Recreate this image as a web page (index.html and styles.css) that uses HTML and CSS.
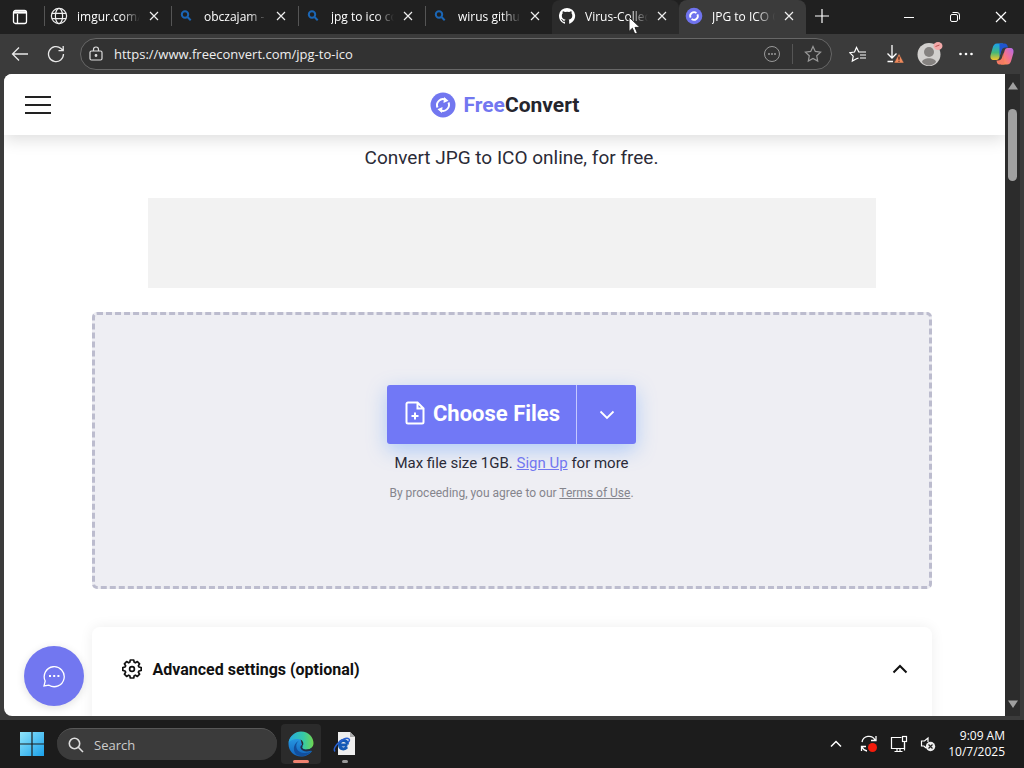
FILE: index.html
```html
<!DOCTYPE html>
<html lang="en">
<head>
<meta charset="UTF-8">
<meta name="viewport" content="width=device-width, initial-scale=1.0">
<title>JPG to ICO Converter - FreeConvert</title>
<link rel="stylesheet" href="styles.css">
</head>
<body>

<div class="browser">
    <div class="tab-strip">
        <button class="tab-menu" aria-label="Tab actions">
            <svg width="16" height="16" viewBox="0 0 16 16" fill="none" stroke="#fff" stroke-width="1.3"><rect x="1.5" y="1.5" width="13" height="13" rx="2"/><path d="M2 3.4h12" stroke-width="2.4"/><path d="M5.5 5v9"/></svg>
        </button>
        <div class="tab">
            <svg width="18" height="18" viewBox="0 0 18 18" fill="none" stroke="#eee" stroke-width="1.2"><circle cx="9" cy="9" r="7.6"/><ellipse cx="9" cy="9" rx="3.6" ry="7.6"/><path d="M2 6.3h14M2 11.7h14"/></svg>
            <span class="tab-title">imgur.com/</span>
            <button class="tab-close" aria-label="Close tab"><svg width="10" height="10" viewBox="0 0 10 10" stroke="#eee" stroke-width="1.2"><path d="M1 1l8 8M9 1l-8 8"/></svg></button>
        </div>
        <div class="tab">
            <svg width="18" height="18" viewBox="0 0 18 18" fill="none" stroke="#1b66b5" stroke-width="2"><circle cx="8" cy="7.5" r="3.2"/><path d="M10.5 10l3.2 3.2"/></svg>
            <span class="tab-title">obczajam - S</span>
            <button class="tab-close" aria-label="Close tab"><svg width="10" height="10" viewBox="0 0 10 10" stroke="#eee" stroke-width="1.2"><path d="M1 1l8 8M9 1l-8 8"/></svg></button>
        </div>
        <div class="tab">
            <svg width="18" height="18" viewBox="0 0 18 18" fill="none" stroke="#1b66b5" stroke-width="2"><circle cx="8" cy="7.5" r="3.2"/><path d="M10.5 10l3.2 3.2"/></svg>
            <span class="tab-title">jpg to ico co</span>
            <button class="tab-close" aria-label="Close tab"><svg width="10" height="10" viewBox="0 0 10 10" stroke="#eee" stroke-width="1.2"><path d="M1 1l8 8M9 1l-8 8"/></svg></button>
        </div>
        <div class="tab">
            <svg width="18" height="18" viewBox="0 0 18 18" fill="none" stroke="#1b66b5" stroke-width="2"><circle cx="8" cy="7.5" r="3.2"/><path d="M10.5 10l3.2 3.2"/></svg>
            <span class="tab-title">wirus github</span>
            <button class="tab-close" aria-label="Close tab"><svg width="10" height="10" viewBox="0 0 10 10" stroke="#eee" stroke-width="1.2"><path d="M1 1l8 8M9 1l-8 8"/></svg></button>
        </div>
        <div class="tab tab-hover">
            <svg width="18" height="18" viewBox="0 0 16 16" fill="#fff"><path d="M8 .8a7.2 7.2 0 0 0-2.3 14c.4.1.5-.2.5-.4v-1.3c-2 .4-2.5-.9-2.5-.9-.3-.8-.8-1-.8-1-.7-.5 0-.5 0-.5.8.1 1.2.8 1.2.8.7 1.1 1.7.8 2.1.6.1-.5.3-.8.5-1-1.6-.2-3.3-.8-3.3-3.6 0-.8.3-1.4.8-1.9-.1-.2-.4-1 .1-1.9 0 0 .6-.2 2 .7a7 7 0 0 1 3.6 0c1.4-.9 2-.7 2-.7.4.9.1 1.7.1 1.9.5.5.7 1.1.7 1.9 0 2.8-1.7 3.4-3.3 3.6.3.2.5.7.5 1.3v2c0 .2.1.5.5.4A7.2 7.2 0 0 0 8 .8z"/></svg>
            <span class="tab-title">Virus-Collec</span>
            <button class="tab-close" aria-label="Close tab"><svg width="10" height="10" viewBox="0 0 10 10" stroke="#eee" stroke-width="1.2"><path d="M1 1l8 8M9 1l-8 8"/></svg></button>
            <svg class="cursor" width="14" height="20" viewBox="0 0 14 20"><path d="M1 1v14.5l3.4-3.2 2.4 5.7 2.6-1.1L7 11.4h5z" fill="#fff" stroke="#222"/></svg>
        </div>
        <div class="tab tab-active">
            <svg width="18" height="18" viewBox="0 0 26 26"><circle cx="13" cy="13" r="12" fill="#6f73ee"/><g fill="none" stroke="#fff" stroke-width="2.6"><path d="M8 15.5a5.6 5.6 0 0 1 8.5-6.8M18 10.5a5.6 5.6 0 0 1-8.5 6.8"/></g></svg>
            <span class="tab-title">JPG to ICO C</span>
            <button class="tab-close" aria-label="Close tab"><svg width="10" height="10" viewBox="0 0 10 10" stroke="#eee" stroke-width="1.2"><path d="M1 1l8 8M9 1l-8 8"/></svg></button>
        </div>
        <button class="new-tab" aria-label="New tab"><svg width="16" height="16" viewBox="0 0 16 16" stroke="#fff" stroke-width="1.2"><path d="M8 1v14M1 8h14"/></svg></button>
        <div class="window-buttons">
            <button aria-label="Minimize"><svg width="12" height="12" viewBox="0 0 12 12" stroke="#fff"><path d="M1 6.5h10"/></svg></button>
            <button aria-label="Restore"><svg width="12" height="12" viewBox="0 0 12 12" fill="none" stroke="#fff"><rect x="1.5" y="3.5" width="7" height="7" rx="1.5"/><path d="M3.5 1.5H8A2.5 2.5 0 0 1 10.5 4v4.5"/></svg></button>
            <button aria-label="Close"><svg width="12" height="12" viewBox="0 0 12 12" stroke="#fff" stroke-width="1.2"><path d="M1 1l10 10M11 1L1 11"/></svg></button>
        </div>
    </div>

    <div class="toolbar">
        <button aria-label="Back"><svg width="18" height="16" viewBox="0 0 18 16" fill="none" stroke="#e8e8e8" stroke-width="1.3"><path d="M17 8H1.5M8 1.5L1.5 8 8 14.5"/></svg></button>
        <button aria-label="Refresh"><svg width="18" height="18" viewBox="0 0 18 18" fill="none" stroke="#e8e8e8" stroke-width="1.3"><path d="M16.5 9A7.5 7.5 0 1 1 14 3.5l2 2M16.2 1v4.700h-4.700"/></svg></button>
        <div class="address">
            <svg width="14" height="16" viewBox="0 0 14 16" fill="none" stroke="#ddd" stroke-width="1.2"><rect x="1" y="5" width="12" height="9" rx="1.5"/><path d="M4.5 5V3.5a2.5 2.5 0 0 1 5 0V5"/><circle cx="7" cy="9.5" r=".8" fill="#ddd"/></svg>
            <input type="text" aria-label="Address" value="https://www.freeconvert.com/jpg-to-ico">
            <button aria-label="Site options"><svg width="18" height="18" viewBox="0 0 18 18" fill="none" stroke="#999"><circle cx="9" cy="9" r="7.5"/><path d="M5 9h2M8 9h2M11 9h2" stroke-width="1.7"/></svg></button>
            <span class="address-line"></span>
            <button aria-label="Add to favorites"><svg width="18" height="18" viewBox="0 0 18 18" fill="none" stroke="#999" stroke-width="1.2"><path d="M9 1.5l2.3 4.9 5.3.7-3.9 3.7 1 5.3L9 13.5l-4.7 2.6 1-5.3L1.4 7.1l5.3-.7z"/></svg></button>
        </div>
        <div class="toolbar-icons">
            <button aria-label="Favorites"><svg width="18" height="18" viewBox="0 0 18 18" fill="none" stroke="#fff" stroke-width="1.2"><path d="M9.5 13l-2 .8-4.200 2.300.9-5L.7 7.700l4.800-.7 2-4.500L9.800 7H17M11 10h6M11 13h6"/></svg></button>
            <button aria-label="Downloads"><svg width="22" height="22" viewBox="0 0 22 22" fill="none" stroke="#fff" stroke-width="1.3"><path d="M9 2v13M4.5 10.5L9 15l4.500-4.500M4.500 18.500H10"/><path d="M16 10.500l5 9.500H11z" fill="#f08a5c" stroke="#3b3b3b" stroke-width=".5"/><path d="M16 13.500v3.300M16 17.800v1" stroke="#4b241a"/></svg></button>
            <button aria-label="Profile"><svg width="26" height="26" viewBox="0 0 26 26"><circle cx="12" cy="13.5" r="11.5" fill="#d2d0ce"/><circle cx="12" cy="11" r="5" fill="#858280"/><path d="M5 21c1-5 13-5 14 0-3.500 4.500-10.500 4.500-14 0z" fill="#858280"/><ellipse cx="21" cy="5" rx="4.5" ry="4" fill="#f3a9a9"/><path d="M18.5 5.5l4-1.500" stroke="#b55"/></svg></button>
            <button aria-label="Settings and more"><svg width="16" height="4" viewBox="0 0 16 4" fill="#fff"><circle cx="2.5" cy="2" r="1.3"/><circle cx="8" cy="2" r="1.3"/><circle cx="13.5" cy="2" r="1.3"/></svg></button>
            <button aria-label="Copilot"><svg width="24" height="22" viewBox="0 0 24 22">
                <defs>
                    <linearGradient id="cpA" x1="0" y1="0" x2="0" y2="1"><stop offset="0" stop-color="#18a0f0"/><stop offset=".55" stop-color="#45b878"/><stop offset="1" stop-color="#f7c52a"/></linearGradient>
                    <linearGradient id="cpB" x1="1" y1="0" x2="0" y2="1"><stop offset="0" stop-color="#b06af0"/><stop offset=".5" stop-color="#f3708f"/><stop offset="1" stop-color="#fb9a3c"/></linearGradient>
                </defs>
                <path d="M7 .5h6L9.5 14c-.5 2-1.400 3-3 3H4c-3 0-4-2-3.400-5l2-7c.8-3 2-4.500 4.400-4.500z" fill="url(#cpA)"/>
                <path d="M9.5 .5h5c2 0 3 1.500 3.500 4h-2.500c-2 0-3.500 1-4 3l-2 6.500z" fill="#1f55cf"/>
                <path d="M17 21.500h-6L14.500 8c.5-2 1.400-3 3-3H20c3 0 4 2 3.400 5l-2 7c-.8 3-2 4.500-4.400 4.500z" fill="url(#cpB)"/>
                <path d="M14.500 21.500h-5c-2 0-2.500-1.500-3-4H8c2 0 3.500-1 4-3l1.500-5z" fill="#f47a62"/></svg></button>
        </div>
    </div>

    <div class="viewport">
        <div class="page">
            <header class="header">
                <button class="hamburger" aria-label="Menu"><span></span><span></span><span></span></button>
                <a class="logo" href="#">
                    <svg width="26" height="26" viewBox="0 0 26 26"><circle cx="13" cy="13" r="12.5" fill="#7277f0"/><g fill="none" stroke="#fff" stroke-width="2"><path d="M7.500 15.500A6 6 0 0 1 15.500 7.700M18.500 10.500a6 6 0 0 1-8 7.800"/></g><path d="M14 5l4.500 3.700-5 2.300zM12 21l-4.500-3.700 5-2.300z" fill="#fff"/></svg>
                    <span><span class="logo-free">Free</span>Convert</span>
                </a>
            </header>
            <main class="content">
                <p class="subtitle">Convert JPG to ICO online, for free.</p>
                <div class="banner"></div>
                <section class="dropzone">
                    <div class="choose">
                        <button class="choose-files">
                            <svg width="20" height="24" viewBox="0 0 20 24" fill="none" stroke="#fff" stroke-width="2"><path d="M12.5 1.5H3A1.5 1.5 0 0 0 1.5 3v18A1.5 1.5 0 0 0 3 22.500h14a1.500 1.500 0 0 0 1.500-1.500V7.500zM12.500 1.500v6h6M10 11.500v7M6.500 15h7"/></svg>
                            Choose Files
                        </button>
                        <button class="choose-more" aria-label="More sources"><svg width="16" height="10" viewBox="0 0 16 10" fill="none" stroke="#fff" stroke-width="1.8"><path d="M1.5 1.5L8 8l6.500-6.500"/></svg></button>
                    </div>
                    <p class="limit">Max file size 1GB. <a href="#">Sign Up</a> for more</p>
                    <p class="terms">By proceeding, you agree to our <a href="#">Terms of Use</a>.</p>
                </section>
                <section class="settings">
                    <button class="settings-head">
                        <svg width="20" height="20" viewBox="0 0 20 20" fill="none" stroke="#111" stroke-width="1.7" stroke-linejoin="round"><path d="M8.300 1h3.400l.5 2.300 1.200.5 2-1.200 2.200 2.200-1.200 2 .5 1.200 2.300.5v3l-2.300.5-.5 1.200 1.200 2-2.200 2.200-2-1.200-1.200.5-.5 2.300H8.300l-.5-2.300-1.200-.5-2 1.200-2.200-2.200 1.200-2-.5-1.200L.8 11.500v-3L3.100 8l.5-1.200-1.200-2 2.200-2.200 2 1.200 1.200-.5z"/><circle cx="10" cy="10" r="2.4"/></svg>
                        <span>Advanced settings (optional)</span>
                        <svg width="16" height="10" viewBox="0 0 16 10" fill="none" stroke="#111" stroke-width="2"><path d="M1.5 8.5L8 2l6.500 6.500"/></svg>
                    </button>
                </section>
            </main>
            <button class="chat" aria-label="Chat">
                <svg width="24" height="24" viewBox="0 0 24 24" fill="none" stroke="#fff" stroke-width="1.3"><path d="M2 22l1.200-5A10 10 0 1 1 7 21.200z"/><path d="M7 12h2M11.200 12h2M15.400 12h2" stroke-width="2"/></svg>
            </button>
        </div>
        <div class="scrollbar">
            <svg width="10" height="8" viewBox="0 0 10 8" fill="#a0a0a0"><path d="M5 0l5 7.500H0z"/></svg>
            <div class="scroll-thumb"></div>
            <svg width="10" height="8" viewBox="0 0 10 8" fill="#a0a0a0"><path d="M5 8L0 .5h10z"/></svg>
        </div>
    </div>
</div>

<div class="taskbar">
    <button class="start" aria-label="Start"><svg width="24" height="24" viewBox="0 0 24 24">
        <defs><linearGradient id="win" x1="0" y1="0" x2="1" y2="1"><stop offset="0" stop-color="#8fe5fb"/><stop offset="1" stop-color="#1aa0ea"/></linearGradient></defs>
        <path d="M0 0h11.400v11.400H0zM12.600 0H24v11.400H12.600zM0 12.600h11.400V24H0zM12.600 12.600H24V24H12.600z" fill="url(#win)"/></svg></button>
    <label class="search">
        <svg width="16" height="16" viewBox="0 0 16 16" fill="none" stroke="#ddd" stroke-width="1.6"><circle cx="6.5" cy="6.5" r="5.2"/><path d="M10.3 10.3L15 15"/></svg>
        <input type="text" placeholder="Search" aria-label="Search">
    </label>
    <button class="app app-open" aria-label="Microsoft Edge"><svg width="26" height="26" viewBox="0 0 26 26">
        <defs>
            <linearGradient id="edA" x1="0" y1="0" x2="1" y2="0"><stop offset="0" stop-color="#25a9e4"/><stop offset=".6" stop-color="#36c9a6"/><stop offset="1" stop-color="#70d650"/></linearGradient>
            <linearGradient id="edB" x1="0" y1="0" x2="0" y2="1"><stop offset="0" stop-color="#2aa0e8"/><stop offset="1" stop-color="#1264bd"/></linearGradient>
        </defs>
        <path d="M.5 13C.5 5 7 2 12 6l2 8 5 5 5 1c-2 3.500-6.500 5.500-11 5.500C6 25.500.5 20 .5 13z" fill="url(#edB)"/>
        <path d="M11 9.500c-5 4-3 12 5 12.500 3 .2 6-.7 8-2.500-3 5-10 7-15 4.500-4.500-3-4.500-11 2-14.500z" fill="#124f9d"/>
        <path d="M.6 11.500C2 4.500 7 .5 13 .5c8 0 12.500 6 12.500 11.500 0 4-3 6.500-6.500 6.500-4 0-5.500-1.700-4.500-3 2-3 .5-7.500-5-7.500C5.500 8 2 9.500.6 11.500z" fill="url(#edA)"/>
        <path d="M14.500 15.500c-1 1.300.5 3 4.500 3 2 0 3.800-.8 5-2-.5 1.500-1 2.500-2 3.500-4 1.200-8.500.2-9.500-3-.3-1.200.3-2.300 1.200-3 .7.500 1 1 .8 1.500z" fill="#20304a"/></svg></button>
    <button class="app app-run" aria-label="Web document"><svg width="24" height="26" viewBox="0 0 24 26"><path d="M5 1h12l5 5v18H5z" fill="#eee"/><path d="M17 1v5h5z" fill="#aaa"/><path d="M14.500 14H6.500c.5 4.500 5 5 7.500 2M6.500 13.500c0-5.500 8-5.500 8 0" fill="none" stroke="#1459b5" stroke-width="3"/><path d="M2 20.500C-2 16 12 5 16 8c1 1 0 2.500-1 3.500" fill="none" stroke="#285fd0" stroke-width="1.5"/></svg></button>
    <div class="tray">
        <button aria-label="Show hidden icons"><svg width="12" height="8" viewBox="0 0 12 8" fill="none" stroke="#fff" stroke-width="1.5"><path d="M1 6.5l5-5 5 5"/></svg></button>
        <button aria-label="Windows Update"><svg width="18" height="18" viewBox="0 0 18 18" fill="none" stroke="#fff" stroke-width="1.3"><path d="M2 7a7 7 0 0 1 13-2M16 1v4.500h-5M1.500 16v-4.500H6M2 12a7 7 0 0 0 5 4"/><circle cx="12.5" cy="12.5" r="4.5" fill="#f41c0c" stroke="none"/></svg></button>
        <button aria-label="Network"><svg width="18" height="18" viewBox="0 0 18 18" fill="none" stroke="#fff" stroke-width="1.2"><path d="M11.500 2.500h-10v11h13V8M4.500 16.500h8M7 13.500v3M10 13.500v3"/><rect x="12.5" y="1.5" width="4" height="5"/><path d="M14.500 6.500v9"/></svg></button>
        <button aria-label="Volume"><svg width="16" height="16" viewBox="0 0 16 16" fill="none" stroke="#fff" stroke-width="1.2"><path d="M8 6V2L4.500 5H1.500v5H4l2 2"/><circle cx="10.5" cy="10.5" r="4.7" fill="#eee" stroke="none"/><path d="M8.500 8.500l4 4M12.500 8.500l-4 4" stroke="#222"/></svg></button>
        <div class="clock"><span>9:09 AM</span><span>10/7/2025</span></div>
    </div>
</div>

</body>
</html>
```
FILE: styles.css
```css
* {
    box-sizing: border-box;
}
body {
    margin: 0;
    height: 100vh;
    display: flex;
    flex-direction: column;
    background: #1c1c1c;
    font-family: "Open Sans", "Noto Sans", sans-serif;
    font-size: 12px;
    color: #fff;
    overflow: hidden;
}
button {
    display: flex;
    align-items: center;
    justify-content: center;
    padding: 0;
    border: 0;
    background: none;
    color: inherit;
    font-family: inherit;
}
input {
    flex: 1;
    min-width: 0;
    padding: 0;
    border: 0;
    outline: 0;
    background: none;
    color: #eee;
    font-family: inherit;
}
svg {
    flex-shrink: 0;
}
.browser {
    flex: 1;
    min-height: 0;
    display: flex;
    flex-direction: column;
    background: #3b3b3b;
}

/* tabs */
.tab-strip {
    display: flex;
    height: 34px;
    background: #202020;
}
.tab-menu {
    width: 44px;
    padding-right: 4px;
}
.tab {
    position: relative;
    flex: 0 1 127px;
    display: flex;
    align-items: center;
    gap: 9px;
    min-width: 0;
    padding: 0 12px 2px 0;
}
.tab::before {
    content: "";
    width: 1px;
    height: 20px;
    margin-right: -4px;
    background: #555;
}
.tab-title {
    flex: 1;
    min-width: 0;
    white-space: nowrap;
    mask-image: linear-gradient(to right, #000 70%, transparent);
}
.tab-hover {
    background: #2b2b2b;
    border-radius: 8px 8px 0 0;
}
.tab-active {
    background: #3b3b3b;
    border-radius: 8px 8px 0 0;
}
.tab-hover::before,
.tab-active::before {
    background: none;
}
.cursor {
    position: absolute;
    left: 76px;
    top: 16px;
    z-index: 2;
}
.new-tab {
    width: 32px;
    padding-bottom: 2px;
}
.window-buttons {
    display: flex;
    margin-left: auto;
}
.window-buttons button {
    width: 46px;
}

/* toolbar */
.toolbar {
    display: flex;
    align-items: center;
    height: 40px;
    padding: 0 4px 0 2px;
}
.toolbar > button {
    width: 36px;
}
.address {
    flex: 1;
    display: flex;
    align-items: center;
    gap: 11px;
    height: 32px;
    margin-left: 6px;
    padding: 0 9px 0 8px;
    border: 1px solid #676767;
    border-radius: 16px;
    background: #323232;
}
.address input {
    font-size: 13px;
}
.address-line {
    width: 1px;
    height: 20px;
    background: #555;
}
.toolbar-icons {
    display: flex;
    margin-left: 8px;
}
.toolbar-icons button {
    width: 36px;
}

/* page area */
.viewport {
    flex: 1;
    min-height: 0;
    display: flex;
    padding: 0 4px 4px;
}
.page {
    position: relative;
    flex: 1;
    overflow: hidden;
    border-radius: 8px 0 0 8px;
    background: #fff;
    color: #2b2b37;
    font-family: Roboto, sans-serif;
}
.header {
    position: relative;
    display: grid;
    grid-template-columns: 1fr auto 1fr;
    align-items: center;
    height: 61px;
    padding: 0 20px;
    background: #fff;
    box-shadow: 0 4px 16px rgba(0, 0, 0, 0.14);
}
.hamburger {
    width: 28px;
    flex-direction: column;
    gap: 6px;
}
.hamburger span {
    width: 26px;
    height: 2px;
    background: #222;
}
.logo {
    display: flex;
    align-items: center;
    gap: 8px;
    color: #25252d;
    font-size: 21px;
    font-weight: bold;
    text-decoration: none;
}
.logo-free {
    color: #7277f0;
}
.content {
    max-width: 854px;
    margin: 0 auto;
    padding: 9px 0 0 14px;
}
.subtitle {
    margin: 0 0 26px;
    font-size: 19px;
    line-height: 28px;
    text-align: center;
}
.banner {
    height: 90px;
    margin: 0 56px 24px;
    background: #f2f2f2;
}
.dropzone {
    display: flex;
    flex-direction: column;
    align-items: center;
    padding: 70px 0 83px;
    border: 3px dashed #bcbcce;
    border-radius: 5px;
    background: #eeeef3;
}
.choose {
    display: flex;
    height: 59px;
    border-radius: 3px;
    background: #7178f6;
    color: #fff;
    box-shadow: 0 6px 20px rgba(80, 150, 255, 0.4);
}
.choose-files {
    gap: 8px;
    padding: 0 16px 3px 18px;
    font-size: 22px;
    font-weight: bold;
}
.choose-more {
    width: 60px;
    border-left: 1px solid #c5c8ff;
}
.limit {
    margin: 9px 0 10px;
    font-size: 15px;
    line-height: 20px;
}
.limit a {
    color: #7277f0;
}
.terms {
    margin: 0;
    color: #85858d;
    font-size: 12px;
    line-height: 20px;
}
.terms a {
    color: inherit;
}
.settings {
    height: 200px;
    margin-top: 38px;
    border-radius: 8px;
    box-shadow: 0 0 14px rgba(0, 0, 0, 0.07);
}
.settings-head {
    width: 100%;
    gap: 11px;
    height: 84px;
    padding: 0 24px 0 30px;
    color: #111;
    font-size: 16px;
    font-weight: bold;
}
.settings-head span {
    flex: 1;
    text-align: left;
}
.chat {
    position: absolute;
    left: 20px;
    bottom: 10px;
    width: 60px;
    height: 60px;
    border-radius: 50%;
    background: #7277f0;
    box-shadow: 0 2px 8px rgba(0, 0, 0, 0.12);
}
.scrollbar {
    display: flex;
    flex-direction: column;
    align-items: center;
    width: 15px;
    padding: 8px 0;
    background: #2c2c2c;
}
.scroll-thumb {
    width: 9px;
    height: 72px;
    margin: 19px 0 auto;
    border-radius: 5px;
    background: #a0a0a0;
}

/* taskbar */
.taskbar {
    display: flex;
    align-items: center;
    height: 48px;
    padding: 0 19px 0 20px;
}
.search {
    display: flex;
    align-items: center;
    gap: 10px;
    width: 220px;
    height: 32px;
    margin: 0 4px 0 13px;
    padding: 0 11px;
    border-top: 1px solid #585858;
    border-radius: 16px;
    background: #3b3b3b;
}
.search input {
    font-size: 13px;
}
.search input::placeholder {
    color: #ccc;
    opacity: 1;
}
.app {
    position: relative;
    width: 40px;
    height: 40px;
    margin-right: 4px;
    border-radius: 4px;
}
.app-open {
    background: #2b2b2b;
}
.app::after {
    content: "";
    position: absolute;
    bottom: 1px;
    width: 6px;
    height: 3px;
    border-radius: 2px;
    background: #999;
}
.app-open::after {
    width: 16px;
    background: #ee8270;
}
.tray {
    display: flex;
    align-items: center;
    gap: 12px;
    margin-left: auto;
}
.tray button:first-child {
    margin-right: 6px;
}
.clock {
    display: flex;
    flex-direction: column;
    font-size: 12px;
    line-height: 16px;
    text-align: right;
}
```
